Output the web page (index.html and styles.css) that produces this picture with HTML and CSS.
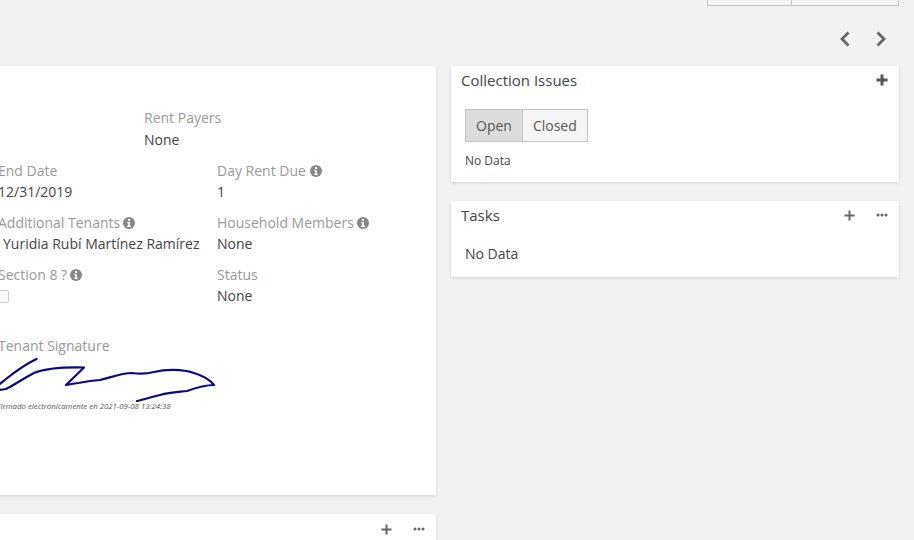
FILE: index.html
```html
<!DOCTYPE html>
<html lang="en">
<head>
<meta charset="utf-8">
<title>Lease</title>
<link rel="stylesheet" href="styles.css">
</head>
<body>
<div class="page">
  <div class="top-actions">
    <div class="top-btn top-btn-a"></div>
    <div class="top-btn top-btn-b"></div>
  </div>
  <div class="pager">
    <svg class="chev" viewBox="0 0 12 16"><path d="M9.5 1.500 L3 8 L9.5 14.500"/></svg>
    <svg class="chev" viewBox="0 0 12 16"><path d="M2.5 1.500 L9 8 L2.5 14.500"/></svg>
  </div>
  <div class="columns">
    <div class="col-left">
      <section class="card main-card">
        <div class="row row-first">
          <div class="field"><div class="label">Rent Payers</div><div class="value">None</div></div>
        </div>
        <div class="row">
          <div class="field"><div class="label">End Date</div><div class="value">12/31/2019</div></div>
          <div class="field"><div class="label">Day Rent Due <svg class="info" viewBox="0 0 12 12"><circle cx="6" cy="6" r="6"/><rect x="5" y="2" width="2" height="2"/><path d="M4.2 5h2.8v3.8h1v1.2h-3.8v-1.2h1v-2.6h-1z"/></svg></div><div class="value">1</div></div>
        </div>
        <div class="row">
          <div class="field"><div class="label">Additional Tenants <svg class="info" viewBox="0 0 12 12"><circle cx="6" cy="6" r="6"/><rect x="5" y="2" width="2" height="2"/><path d="M4.2 5h2.8v3.8h1v1.2h-3.8v-1.2h1v-2.6h-1z"/></svg></div><div class="value value-indent">Yuridia Rubí Martínez Ramírez</div></div>
          <div class="field"><div class="label">Household Members <svg class="info" viewBox="0 0 12 12"><circle cx="6" cy="6" r="6"/><rect x="5" y="2" width="2" height="2"/><path d="M4.2 5h2.8v3.8h1v1.2h-3.8v-1.2h1v-2.6h-1z"/></svg></div><div class="value">None</div></div>
        </div>
        <div class="row">
          <div class="field"><div class="label">Section 8 ? <svg class="info" viewBox="0 0 12 12"><circle cx="6" cy="6" r="6"/><rect x="5" y="2" width="2" height="2"/><path d="M4.2 5h2.8v3.8h1v1.2h-3.8v-1.2h1v-2.6h-1z"/></svg></div><div class="value"><span class="checkbox"></span></div></div>
          <div class="field"><div class="label">Status</div><div class="value">None</div></div>
        </div>
        <div class="signature">
          <div class="label">Tenant Signature</div>
          <svg class="sig-svg" viewBox="-2 355 222 47">
            <path d="M36.500 358 C26 363 16 370 6 378 C1 382 -3 386 -8 388 C-4 390 1 389 6 388 C16 383 24 377 34 372 C44 368 60 366 84 366.500 L66 384 C78 382 88 380 100 379 C112 376 122 372 132 372 C140 373 146 373 154 371 C166 368 182 368 194 372 C204 375 210 379 214 384 C206 384 198 386 187 390 C178 391 170 391 160 394 C152 396 145 398 137 400"/>
          </svg>
          <div class="sig-note">Firmado electrónicamente en 2021-09-08 13:24:38</div>
        </div>
      </section>
      <section class="card stub-card">
        <div class="tools">
          <svg class="plus-thin" viewBox="0 0 12 12"><path d="M6 0.500v11M0.500 6h11"/></svg>
          <svg class="dots" viewBox="0 0 12 4"><circle cx="2" cy="2" r="1.500"/><circle cx="6" cy="2" r="1.500"/><circle cx="10" cy="2" r="1.500"/></svg>
        </div>
      </section>
    </div>
    <div class="col-right">
      <section class="card issues-card">
        <header class="card-head">
          <h2 class="card-title">Collection Issues</h2>
          <svg class="plus-bold" viewBox="0 0 12 12"><path d="M6 0.500v11M0.500 6h11"/></svg>
        </header>
        <div class="toggle">
          <span class="toggle-btn toggle-on">Open</span><span class="toggle-btn">Closed</span>
        </div>
        <p class="no-data-small">No Data</p>
      </section>
      <section class="card tasks-card">
        <header class="card-head">
          <h2 class="card-title">Tasks</h2>
          <div class="tools tools-right">
            <svg class="plus-thin" viewBox="0 0 12 12"><path d="M6 0.500v11M0.500 6h11"/></svg>
            <svg class="dots" viewBox="0 0 12 4"><circle cx="2" cy="2" r="1.500"/><circle cx="6" cy="2" r="1.500"/><circle cx="10" cy="2" r="1.500"/></svg>
          </div>
        </header>
        <p class="no-data">No Data</p>
      </section>
    </div>
  </div>
</div>
</body>
</html>
```
FILE: styles.css
```css
* { box-sizing: border-box; }
html, body { margin: 0; padding: 0; }
body {
  background: #f2f2f2;
  font-family: "Open Sans", "Liberation Sans", sans-serif;
  font-size: 14px;
  color: #444;
}
.page {
  width: 914px;
  height: 540px;
  overflow: hidden;
}
.top-actions {
  display: flex;
  justify-content: flex-end;
  height: 6px;
  padding-right: 15px;
}
.top-btn {
  height: 6px;
  background: #f5f5f5;
  border: 1px solid #c4c4c4;
  border-top: 0;
}
.top-btn-a { width: 85px; }
.top-btn-b { width: 108px; margin-left: -1px; }
.pager {
  display: flex;
  justify-content: flex-end;
  align-items: center;
  gap: 24px;
  height: 60px;
  padding: 6px 27px 0 0;
}
.chev { width: 12px; height: 16px; fill: none; stroke: #666; stroke-width: 2.800; }
.columns {
  display: flex;
  gap: 15px;
  margin-left: -20px;
}
.col-left { width: 456px; flex: none; }
.col-right { width: 448px; flex: none; }
.card {
  background: #fff;
  box-shadow: 0 1px 3px rgba(0,0,0,.14);
}
.main-card {
  height: 429px;
  padding: 41px 0 0 18px;
}
.row { display: flex; height: 52px; }
.row-first { padding-left: 146px; height: 53px; }
.field { width: 220px; flex: none; }
.row-first .field { width: auto; }
.label {
  color: #999;
  line-height: 21px;
  height: 21px;
  white-space: nowrap;
}
.row .field + .field { margin-left: -1px; }
.value {
  line-height: 21px;
  height: 21px;
  white-space: nowrap;
}
.row-first .value { margin-top: 1px; }
.value-indent { padding-left: 5px; }
.info {
  width: 12px;
  height: 12px;
  fill: #888;
  vertical-align: -1px;
  margin-left: -1px;
}
.field + .field .info { margin-left: 0; }
.info rect, .info path { fill: #fff; }
.checkbox {
  display: block;
  width: 11px;
  height: 13px;
  margin-top: 5px;
  border: 1px solid #ccc;
  border-radius: 2px;
  background: #fafafa;
}
.signature { padding-top: 19px; }
.sig-svg {
  display: block;
  width: 222px;
  height: 47px;
  overflow: visible;
  fill: none;
  stroke: #0a0a80;
  stroke-width: 2.200;
  stroke-linecap: round;
  stroke-linejoin: round;
}
.sig-note {
  font-size: 7.800px;
  font-style: italic;
  line-height: 10px;
  color: #555;
  margin: -2px 0 0 -1px;
  white-space: nowrap;
}
.stub-card {
  height: 60px;
  margin-top: 19px;
}
.tools {
  display: flex;
  align-items: center;
  justify-content: flex-end;
  gap: 21px;
  height: 30px;
  padding-right: 11px;
}
.tools-right { padding-right: 0; height: auto; }
.plus-thin { width: 11px; height: 11px; fill: none; stroke: #666; stroke-width: 2.200; }
.plus-bold { width: 12px; height: 12px; fill: none; stroke: #555; stroke-width: 3; }
.dots { width: 12px; height: 4px; fill: #666; }
.card-head {
  display: flex;
  align-items: center;
  justify-content: space-between;
  height: 28px;
  margin-bottom: 2px;
  padding: 0 11px 0 10px;
}
.card-title {
  margin: 0;
  font-size: 15px;
  font-weight: 400;
  color: #444;
}
.issues-card { height: 116px; }
.tasks-card { height: 76px; margin-top: 19px; }
.toggle { display: flex; padding: 13px 0 0 14px; }
.toggle-btn {
  height: 33px;
  line-height: 31px;
  padding: 0 10px;
  background: #f5f5f5;
  border: 1px solid #c4c4c4;
  color: #555;
}
.toggle-on { background: #dcdcdc; margin-right: -1px; }
.no-data-small {
  margin: 10px 0 0 14px;
  font-size: 12px;
  line-height: 17px;
}
.no-data {
  margin: 15px 0 0 14px;
  line-height: 20px;
}
```
